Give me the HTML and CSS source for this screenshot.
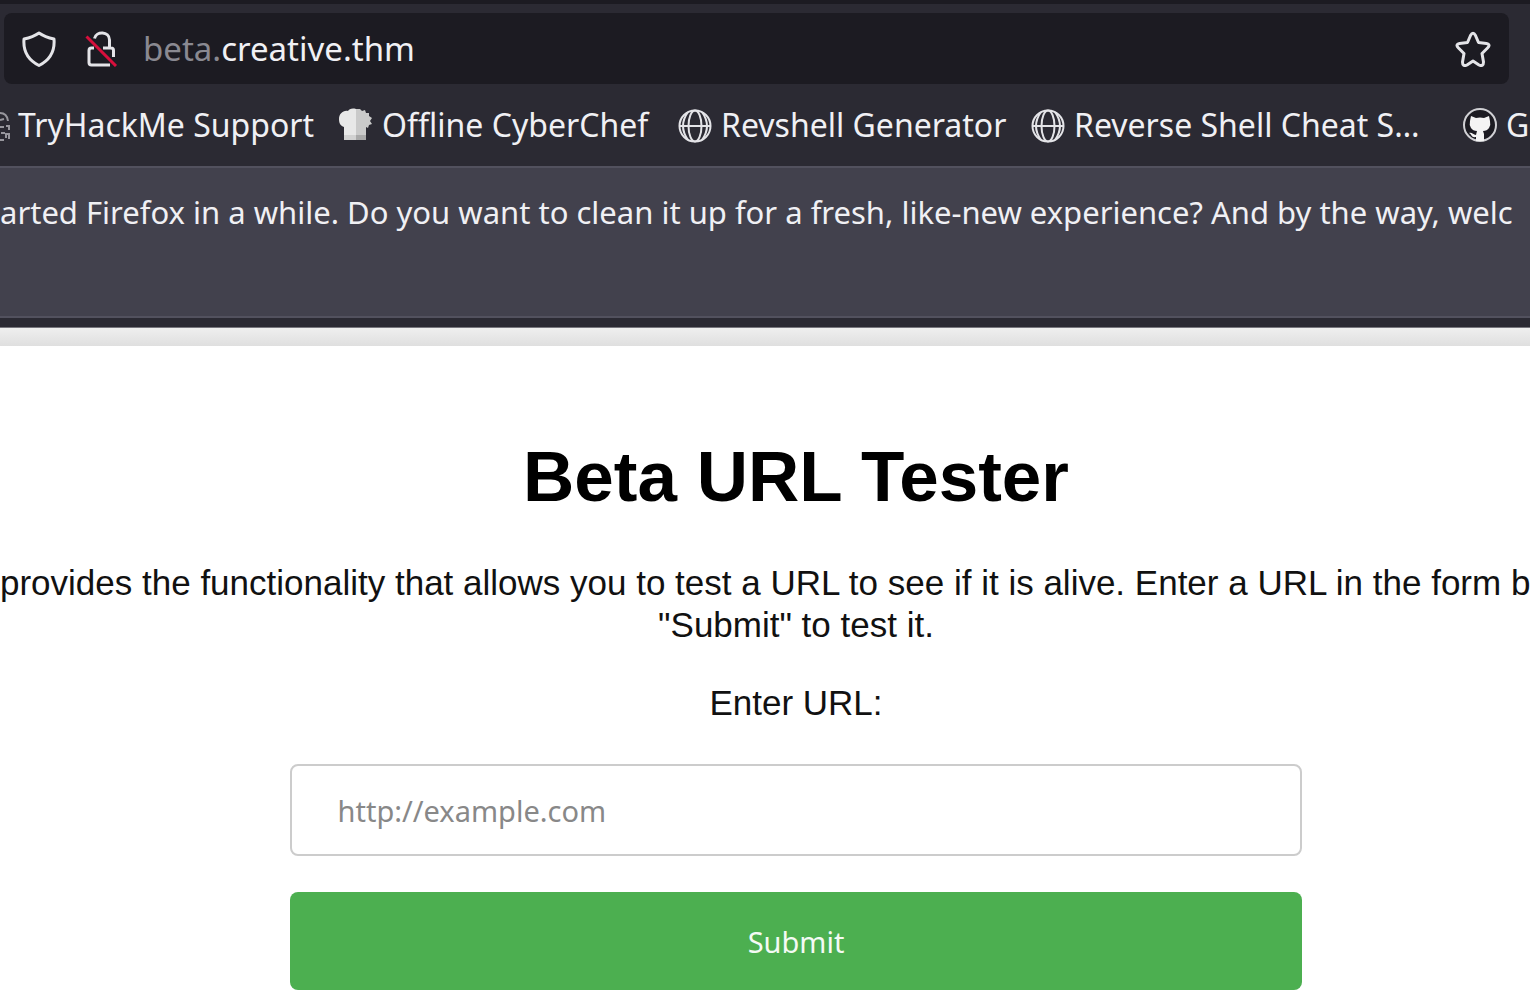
FILE: index.html
```html
<!DOCTYPE html>
<html lang="en">
<head>
    <meta charset="UTF-8">
    <meta name="viewport" content="width=device-width, initial-scale=1.0">
    <title>Beta URL Tester</title>
    <link rel="stylesheet" href="styles.css">
</head>
<body>
    <header class="browser">
        <div class="urlbar">
            <svg class="icon" viewBox="0 0 36 36">
                <path d="M18 2 C13 5.500 8 7 3 8 C2 20 7 29 18 34.500 C29 29 34 20 33 8 C28 7 23 5.500 18 2 Z"/>
            </svg>
            <svg class="icon lock" viewBox="0 0 36 36">
                <path d="M9.500 7.500 C11 0 24.500 0 24.500 9 V16.500 M9 17 H6.500 Q4 17 4 19.500 V31.500 Q4 34 6.500 34 H25 M18 17 H26 Q28.500 17 28.500 19.500 V26"/>
                <path class="slash" d="M1.500 5.500 L31 35"/>
            </svg>
            <div class="address"><span class="subdomain">beta.</span>creative.thm</div>
            <svg class="icon star" viewBox="0 0 36 36">
                <path d="M15.500 4.500 Q18 0 20.500 4.500 L23.500 11.500 L31.500 12.500 Q36 13.500 32.500 17 L27 22.500 L28.500 31 Q28.500 36 24 34 L18 30 L12 34 Q7.500 36 7.500 31 L9 22.500 L3.500 17 Q0 13.500 4.500 12.500 L12.500 11.500 Z"/>
            </svg>
        </div>
        <nav class="bookmarks">
            <a class="bookmark first" href="#">
                <svg class="half-icon" viewBox="0 0 10 34">
                    <path d="M0 5 Q7 5 8 13 M0 12 L4 11 M0 19 H4 M6 18 H9 V22 M1 25 H5 M6 30 V26 H9 V31 M0 32 H4"/>
                </svg>
                TryHackMe Support
            </a>
            <a class="bookmark" href="#">
                <svg class="favicon" viewBox="0 0 36 36">
                    <path fill="#e8e8e8" d="M18 2 C14 1 11 2 10 4 C5 3 1 7 1 12 C1 17 3 19 6 20 V33 H18 Z"/>
                    <path fill="#cacaca" d="M18 2 L22 2 L24 4 L27 3 L28 6 L31 6 L31 9 L34 11 L32 14 L34 17 L31 18 L30 21 L28 20 V33 H18 Z"/>
                    <path fill="#d2d2d2" d="M6 28 H18 V33 H6 Z"/>
                    <path fill="#aaa" d="M18 28 H28 V33 H18 Z"/>
                </svg>
                Offline CyberChef
            </a>
            <a class="bookmark" href="#">
                <svg class="favicon globe" viewBox="0 0 36 36">
                    <circle cx="18" cy="19" r="15.500"/>
                    <ellipse cx="18" cy="19" rx="6.500" ry="15.500"/>
                    <path d="M2.500 19 H33.500 M11 5 Q1 19 11 33 M25 5 Q35 19 25 33"/>
                </svg>
                Revshell Generator
            </a>
            <a class="bookmark" href="#">
                <svg class="favicon globe" viewBox="0 0 36 36">
                    <circle cx="18" cy="19" r="15.500"/>
                    <ellipse cx="18" cy="19" rx="6.500" ry="15.500"/>
                    <path d="M2.500 19 H33.500 M11 5 Q1 19 11 33 M25 5 Q35 19 25 33"/>
                </svg>
                Reverse Shell Cheat S…
            </a>
            <a class="bookmark" href="#">
                <svg class="favicon" viewBox="0 0 36 36">
                    <circle cx="18" cy="18" r="16" fill="#1c1b22" stroke="#d0d0d4" stroke-width="2"/>
                    <path fill="#f4f4f4" d="M9 9 L14 11 Q18 10 22 11 L27 9 L28 14 Q29 18 27 21 Q25 24 21 24 L22 27 V34 H14 V30 C9 31 10 27 7 26 C10 25 11 28 14 28 L15 24 Q11 24 9 21 Q7 18 8 14 Z"/>
                </svg>
                G
            </a>
        </nav>
        <div class="notification">arted Firefox in a while. Do you want to clean it up for a fresh, like-new experience? And by the way, welc</div>
    </header>

    <main class="page">
        <h1>Beta URL Tester</h1>
        <p class="intro">
            <span class="intro-line wide">provides the functionality that allows you to test a URL to see if it is alive. Enter a URL in the form b</span>
            <span class="intro-line">"Submit" to test it.</span>
        </p>
        <form class="url-form">
            <label for="url">Enter URL:</label>
            <input type="text" id="url" name="url" placeholder="http://example.com">
            <button type="button">Submit</button>
        </form>
    </main>
</body>
</html>
```

FILE: styles.css
```css
* {
    margin: 0;
    padding: 0;
    box-sizing: border-box;
}

body {
    font-family: "Liberation Sans", Arial, sans-serif;
    font-size: 35px;
    line-height: 42px;
    color: #111;
    background: white;
    overflow: hidden;
}

/* browser chrome */
.browser {
    font-family: "Noto Sans", sans-serif;
    font-size: 32px;
    line-height: 40px;
    color: #f0f0f4;
    background: #2b2a33;
    border-top: 4px solid #1c1b22;
    border-bottom: 1px solid #77767d;
    padding: 9px 0;
}

.urlbar {
    display: flex;
    align-items: center;
    height: 71px;
    margin: 0 21px 0 4px;
    padding: 0 18px 0 17px;
    border-radius: 8px;
    background: #1c1b22;
}

.icon {
    width: 36px;
    height: 36px;
    fill: none;
    stroke: #e4e4e8;
    stroke-width: 3;
    stroke-linejoin: round;
}

.lock {
    margin: 0 22px 0 28px;
}

.icon .slash {
    stroke: #d70f3c;
}

.address {
    flex: 1;
    font-size: 33px;
}

.subdomain {
    color: #8a8991;
}

.bookmarks {
    display: grid;
    grid-template-columns: 338px 339px 353px 432px 1fr;
    align-items: center;
    height: 82px;
}

.bookmark {
    display: flex;
    align-items: center;
    gap: 8px;
    color: #f0f0f4;
    text-decoration: none;
    white-space: nowrap;
}

.favicon {
    flex: none;
    width: 36px;
    height: 36px;
}

.globe {
    fill: none;
    stroke: #e4e4e8;
    stroke-width: 2;
}

.half-icon {
    width: 10px;
    height: 34px;
    fill: none;
    stroke: #97969d;
    stroke-width: 2;
}

.notification {
    height: 152px;
    padding-top: 24px;
    font-size: 31px;
    white-space: nowrap;
    background: #42414d;
    border-top: 2px solid #52515e;
    border-bottom: 2px solid #52515e;
}

/* page */
.page {
    padding: 96px 0 18px 62px;
    text-align: center;
    background: linear-gradient(#efefef, #dfdfdf 18px, white 18px);
}

h1 {
    font-size: 71px;
    line-height: 106px;
    color: black;
}

.intro {
    margin: 32px 0 36px;
}

.intro-line {
    display: block;
}

.wide {
    margin-left: -62px;
    text-align: left;
    white-space: nowrap;
}

.url-form {
    display: flex;
    flex-direction: column;
    width: 69%;
    margin: 0 auto;
}

input[type="text"] {
    height: 92px;
    margin: 40px 0 36px;
    padding: 0 46px;
    border: 2px solid #ccc;
    border-radius: 8px;
    font-family: "Noto Sans", sans-serif;
    font-size: 29px;
    outline: none;
}

input::placeholder {
    color: #888;
}

button {
    height: 98px;
    border: none;
    border-radius: 8px;
    font-family: "Noto Sans", sans-serif;
    font-size: 29px;
    color: #f4faf4;
    background: #4caf50;
    cursor: pointer;
}

button:hover {
    background: #45a049;
}
```
